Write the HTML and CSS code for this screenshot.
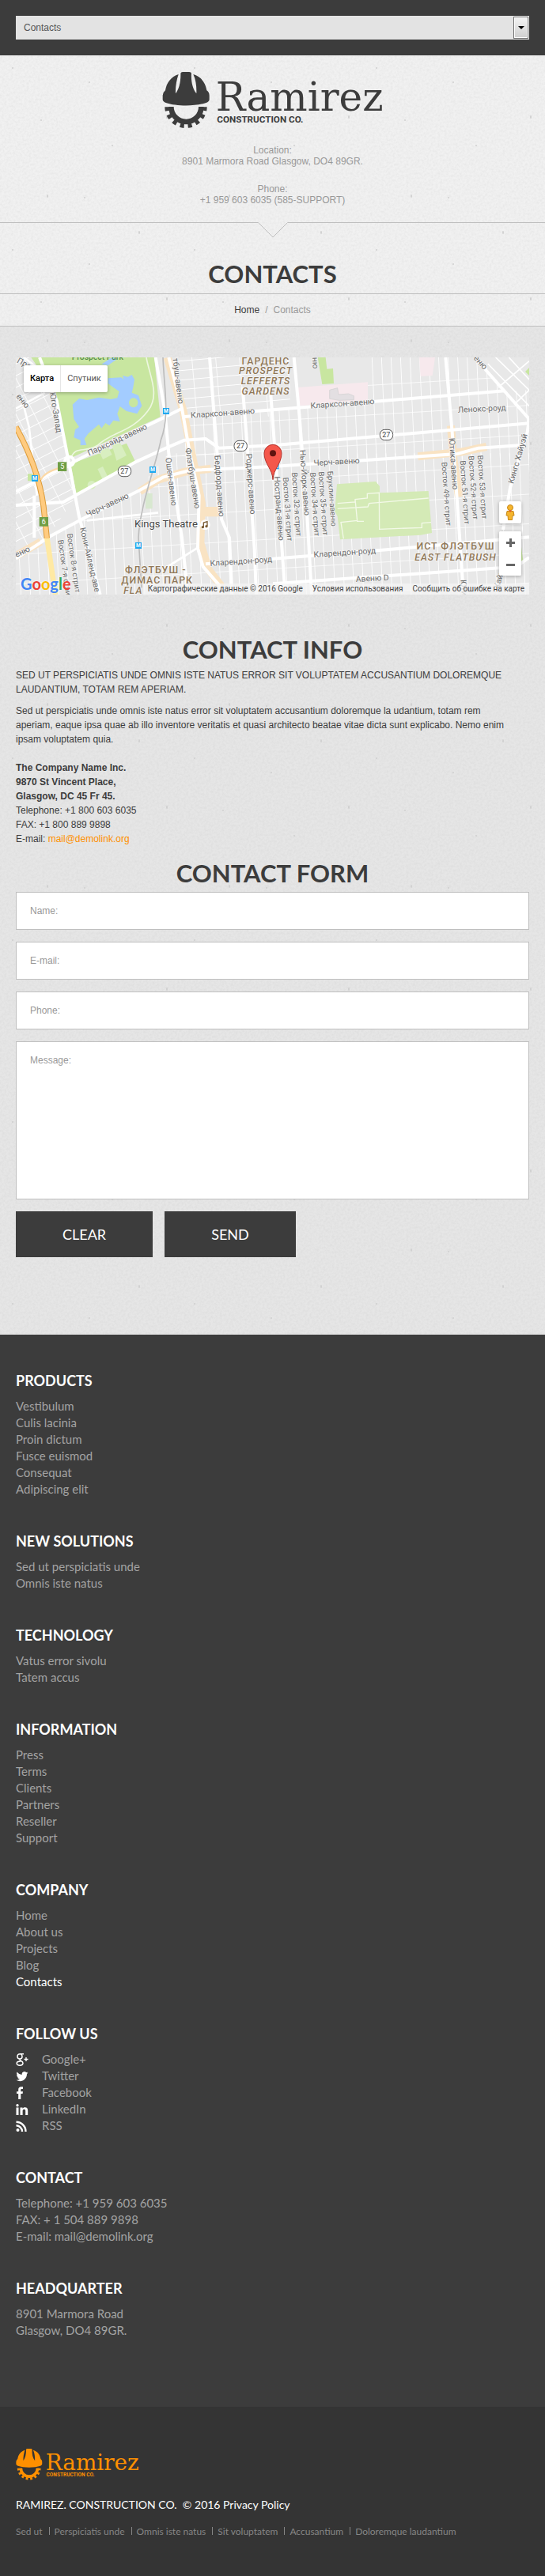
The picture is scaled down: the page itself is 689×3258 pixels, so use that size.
FILE: index.html
```html
<!DOCTYPE html>
<html lang="en">
<head>
<meta charset="utf-8">
<meta name="viewport" content="width=device-width, initial-scale=1">
<title>Contacts</title>
<link rel="stylesheet" href="styles.css">
</head>
<body>
<svg class="defs" width="0" height="0" aria-hidden="true">
  <symbol id="logo" viewBox="48 30 840 216">
    <path d="M118 38Q119 33 126 33H151Q158 33 159 38C157 70 164 98 178 115C179 90 176 62 166 42C196 50 213 75 217 103Q227 110 227 122V138Q226 146 215 150C175 164 102 164 62 150Q51 146 50 138V122Q51 110 60 103C64 75 82 50 110 42C102 65 98 90 99 115C112 98 119 70 118 38Z"/>
    <path d="M82 165A57 57 0 0 0 196 165" fill="none" stroke="currentColor" stroke-width="20"/>
    <path d="M66 166A72 72 0 0 0 210 166" fill="none" stroke="currentColor" stroke-width="16" stroke-dasharray="15 15.1"/>
    <text x="251" y="180" font-family="DejaVu Serif, serif" font-size="150">Ramirez</text>
    <text x="256" y="224" font-family="Roboto, sans-serif" font-weight="700" font-size="35">CONSTRUCTION CO.</text>
  </symbol>
</svg>

<nav class="topbar">
  <div class="picker">
    <select class="picker-select" aria-label="Page">
      <option>Contacts</option>
    </select>
  </div>
</nav>

<header class="header">
  <a class="brand" href="#"><svg class="brand-logo" role="img" aria-label="Ramirez"><use href="#logo"/></svg></a>
  <p class="header-line">Location:<br>8901 Marmora Road Glasgow, DO4 89GR.</p>
  <p class="header-line">Phone:<br>+1 959 603 6035 (585-SUPPORT)</p>
</header>
<div class="rule">
  <i class="rule-line"></i>
  <svg class="rule-notch" width="38" height="20" viewBox="0 0 38 20" aria-hidden="true"><path d="M0 .5H.5L19 19L37.500 .5H38" fill="none" stroke="#bfbfbf"/></svg>
  <i class="rule-line"></i>
</div>
<div class="title"><h1 class="heading">CONTACTS</h1></div>
<nav class="crumbs"><a class="crumbs-link" href="#">Home</a><span>/</span><span>Contacts</span></nav>

<main class="main">
  <section class="map">
    <svg class="map-art" viewBox="60 36 1947 900" preserveAspectRatio="xMidYMid slice" aria-hidden="true">
      <defs>
        <pattern id="grid" width="36" height="112" patternUnits="userSpaceOnUse" patternTransform="matrix(1 -.06 .045 1 0 0)">
          <path d="M0 0V112M0 0H36" stroke="#fff" stroke-width="5" fill="none"/>
        </pattern>
        <pattern id="grid2" width="62" height="40" patternUnits="userSpaceOnUse" patternTransform="rotate(-27)">
          <path d="M0 0V40M0 0H62" stroke="#fff" stroke-width="5" fill="none"/>
        </pattern>
        <pattern id="grid3" width="90" height="36" patternUnits="userSpaceOnUse" patternTransform="rotate(-5)">
          <path d="M0 0V36M0 0H90" stroke="#fff" stroke-width="5" fill="none"/>
        </pattern>
      </defs>
      <rect x="60" y="36" width="1947" height="900" fill="#e8e8e8"/>
      <path d="M60 36H210L290 560L180 720L60 790Z" fill="url(#grid2)"/>
      <path d="M60 800L180 720L520 540L640 400L1035 400H2007V936H60Z" fill="url(#grid)"/>
      <path d="M690 260L2007 160V420H690Z" fill="url(#grid)"/>
      <path d="M640 36H1100V260H690Z" fill="url(#grid3)"/>
      <path d="M1395 36H1820L1910 160L1395 200Z" fill="url(#grid)"/>
      <path d="M1850 60L2007 220M1880 36L2007 160M1930 36L2007 120M1890 150L2007 50M1950 215L2007 160" stroke="#fff" stroke-width="5"/>
      <g fill="none" stroke="#f9e3c3" stroke-width="30">
        <path d="M635 36L695 240L735 440L765 590L760 740L790 840L840 905M530 545L600 500L700 470L800 458M60 790L155 735"/>
        <path d="M1585 412L1750 395L1845 375M1710 295L1720 420L1740 565"/>
      </g>
      <path d="M765 603H828V640H765Z" fill="#f9e3c3"/>
      <path d="M1130 150L1395 130V200L1135 220ZM1590 36H1650L1640 105L1595 108Z" fill="#f7e9ed"/>
      <path d="M1250 160l30-8 4 25 38-3 20 8v15l-55 2-37-6z" fill="#e3dfe2" stroke="#cfcfcf" stroke-width="2"/>
      <g fill="#c8e6a0">
        <path d="M118 36H585L608 262L275 415L256 412L208 168Z"/>
        <path d="M268 440L480 362L515 435L290 555Z"/>
        <path d="M105 478H140V505H105ZM1205 36H1235L1240 80L1263 78L1266 135L1222 138Z"/>
      </g>
      <g transform="translate(1035 0)">
        <path d="M243 517L390 507L405 525V550L590 543L603 702L560 710L255 727L245 640L235 620Z" fill="#d4eab6"/>
        <path d="M245 590L312 585V575L358 570V553L403 550L404 688L565 682V665L600 662M312 575L320 658H345M320 655L258 662L268 724M245 610L360 603L365 590L590 570" fill="none" stroke="#f3f9e8" stroke-width="4"/>
        <path d="M957 90L972 75V105ZM942 755L950 815H940Z" fill="#c8e6a0"/>
      </g>
      <path d="M552 552H578V610H552Z" fill="#d8e8d0"/>
      <path d="M275 215L300 192L330 198L375 188L420 195L445 190L452 165L430 150L410 135V115L460 112L470 120L465 105L485 110L500 102L510 120L505 150L500 170L525 180L538 220L520 250L480 240L455 222L445 250L455 280L430 275L415 295L400 285L385 305L375 290L335 325L320 345L328 368L305 370V350L280 340L285 310L300 300L280 270Z" fill="#a3ccff"/>
      <ellipse cx="506" cy="208" rx="17" ry="18" fill="#c8e6a0"/>
      <path d="M385 62L425 36L445 42L410 66Z" fill="#a3ccff"/>
      <path d="M555 36C565 100 610 180 560 240C500 320 420 320 370 370C320 400 290 370 270 415" fill="none" stroke="#edf7e0" stroke-width="5"/>
      <path d="M375 390l35-15 15 30-35 18zM425 370l30-12 25 50-38 20zM370 460l20-10 22 45-20 10z" fill="#d8eec0"/>
      <circle cx="348" cy="520" r="16" fill="#d8eec0"/>
      <g fill="none" stroke="#fff" stroke-width="12" stroke-linejoin="round">
        <path d="M60 545L275 435L400 370L600 275L690 230"/>
        <path d="M60 597L240 585L520 430L630 380L700 350L780 345L830 380L1035 370L2007 286"/>
        <path d="M60 800L190 715L330 640L530 540L620 490L720 465L1035 450L1735 402L1815 380L1970 370"/>
        <path d="M690 262L1035 235L1915 163"/>
        <path d="M640 36L690 230L720 400L755 560L750 760L770 830L840 910"/>
        <path d="M590 36L625 240L640 400L690 720L712 936"/>
        <path d="M795 36L825 420L840 650L870 720L880 936"/>
        <path d="M920 150L940 400L965 760L972 936"/>
        <path d="M1025 150L1055 560L1082 936"/>
        <path d="M1115 36L1135 250L1165 640L1182 936"/>
        <path d="M1690 36L1715 320L1735 600L1758 936"/>
        <path d="M780 820L1035 800L1475 765L2007 718"/>
        <path d="M1035 895L1895 835L1965 825L2007 795"/>
        <path d="M1800 36L2007 270L2000 320L1935 530L1908 690"/>
        <path d="M150 36L215 200L260 430L300 640L380 936M130 560V720"/>
        <path d="M80 180L110 300L140 560M60 230L170 170M90 36L200 120M620 840L755 755M330 655L600 625" stroke-width="8"/>
        <circle cx="263" cy="430" r="17"/>
      </g>
      <path d="M618 36C622 150 645 260 610 350C590 450 530 600 525 720L537 910" fill="none" stroke="#bdbdbd" stroke-width="5"/>
      <path d="M178 720L210 936" stroke="#ffe9a3" stroke-width="20"/>
      <path d="M60 300C110 390 150 490 165 600L178 722" fill="none" stroke="#dc9c3a" stroke-width="22"/>
      <path d="M60 300C110 390 150 490 165 600L178 722" fill="none" stroke="#ffcb80" stroke-width="16"/>
      <path d="M155 500Q170 470 230 455" fill="none" stroke="#fbd9a8" stroke-width="7"/>

      <g class="map-street">
        <text transform="translate(338 410) rotate(-25)">Парксайд-авеню</text>
        <text transform="translate(332 642) rotate(-25)">Черч-авеню</text>
        <text transform="translate(724 266) rotate(-4)">Кларксон-авеню</text>
        <text transform="translate(797 828) rotate(-4)">Кларендон-роуд</text>
        <text transform="translate(62 55) rotate(28)">Проспект</text>
        <text transform="translate(60 185) rotate(50)">еню</text>
        <text transform="translate(62 795) rotate(-25)">еню</text>
        <text transform="translate(188 170) rotate(80)">Юго-Запад</text>
        <text transform="translate(655 40) rotate(83)">тбуш-авеню</text>
        <text transform="translate(628 418) rotate(83)">Ошен-авеню</text>
        <text transform="translate(703 382) rotate(81)">Флэтбуш-авеню</text>
        <text transform="translate(814 408) rotate(86)">Бедфорд-авеню</text>
        <text transform="translate(933 402) rotate(86)">Роджерс-авеню</text>
        <text transform="translate(303 684) rotate(77)">Кони-Айленд-аве</text>
      </g>
      <g class="map-street" transform="translate(1035 0)">
        <text transform="translate(143 230) rotate(-4)">Кларксон-авеню</text>
        <text transform="translate(702 246) rotate(-3)">Ленокс-роуд</text>
        <text transform="translate(155 447) rotate(-3)">Черч-авеню</text>
        <text transform="translate(155 795) rotate(-4)">Кларендон-роуд</text>
        <text transform="translate(315 888) rotate(-3)">Авеню D</text>
        <text transform="translate(150 36) rotate(88)">ню</text>
        <text transform="translate(760 40) rotate(48)">еню</text>
        <text transform="translate(912 517) rotate(-74)">Кингс Хайуэй</text>
        <text transform="translate(858 915) rotate(-74)">Хайуэй</text>
        <text transform="translate(712 880) rotate(86)">Юти</text>
        <text transform="translate(5 488) rotate(86)">Ностранд-авеню</text>
        <text transform="translate(102 388) rotate(86)">Нью-Йорк-авеню</text>
        <text transform="translate(668 342) rotate(86)">Ютика-авеню</text>
      </g>
      <g class="map-street map-minor">
        <text transform="translate(254 706) rotate(82)">Восток 8-я стрит</text>
        <text transform="translate(220 730) rotate(82)">Восток 7-я стрит</text>
        <text transform="translate(1073 492) rotate(86)">Восток 31-я стрит</text>
        <text transform="translate(1107 473) rotate(86)">Восток 32-я стрит</text>
        <text transform="translate(1176 473) rotate(86)">Восток 34-я стрит</text>
        <text transform="translate(1208 470) rotate(86)">Восток 35-я стрит</text>
        <text transform="translate(1242 468) rotate(86)">Бруклин-авеню</text>
        <text transform="translate(1675 434) rotate(86)">Восток 49-я стрит</text>
        <text transform="translate(1745 428) rotate(86)">Восток 51-я стрит</text>
        <text transform="translate(1777 410) rotate(86)">Восток 52-я стрит</text>
        <text transform="translate(1811 408) rotate(86)">Восток 53-я стрит</text>
      </g>
      <g class="map-area" text-anchor="middle">
        <text x="1008" y="62">ГАРДЕНС</text>
        <g font-style="italic"><text x="1008" y="100">PROSPECT</text><text x="1008" y="139">LEFFERTS</text><text x="1008" y="178">GARDENS</text></g>
        <text x="590" y="856">ФЛЭТБУШ -</text>
        <text x="596" y="894">ДИМАС ПАРК</text>
        <text x="505" y="932" font-style="italic">FLA</text>
        <text x="1728" y="766">ИСТ ФЛЭТБУШ</text>
        <text x="1728" y="806" font-style="italic">EAST FLATBUSH</text>
      </g>
      <text x="370" y="45" text-anchor="middle" font-family="Roboto, sans-serif" font-size="31" font-weight="500" fill="#568c48">Prospect Park</text>
      <text x="510" y="682" font-family="Roboto, sans-serif" font-size="39" fill="#444" stroke="#fff" stroke-width="4" paint-order="stroke">Kings Theatre</text>
      <circle cx="778" cy="671" r="19" fill="#fff"/><path d="M772 680V663L786 659V676" fill="none" stroke="#7b5c35" stroke-width="4"/><circle cx="769" cy="680" r="5" fill="#7b5c35"/><circle cx="783" cy="677" r="5" fill="#7b5c35"/>
      <g class="map-shield" text-anchor="middle">
        <rect x="448" y="448" width="49" height="40" rx="18"/><text x="472" y="477">27</text>
        <rect x="888" y="352" width="49" height="40" rx="18"/><text x="912" y="381">27</text>
        <rect x="1441" y="310" width="49" height="40" rx="18"/><text x="1465" y="339">27</text>
      </g>
      <g class="map-exit" text-anchor="middle">
        <rect x="219" y="433" width="34" height="35"/><text x="236" y="459">5</text>
        <rect x="149" y="642" width="34" height="35"/><text x="166" y="669">6</text>
      </g>
      <g class="map-metro" text-anchor="middle">
        <rect x="618" y="228" width="24" height="24"/><text x="630" y="247">M</text>
        <rect x="567" y="450" width="24" height="24"/><text x="579" y="469">M</text>
        <rect x="120" y="483" width="24" height="24"/><text x="132" y="502">M</text>
        <rect x="513" y="738" width="24" height="24"/><text x="525" y="757">M</text>
        <rect x="1034" y="436" width="24" height="24"/><text x="1046" y="455">M</text>
      </g>
      <path d="M1035 500C1034 460 1002 440 1002 400A33 33 0 0 1 1068 400C1068 440 1036 460 1035 500Z" fill="#f4574b" stroke="#b5322b" stroke-width="3"/>
      <circle cx="1035" cy="400" r="12" fill="#5e1410"/>
    </svg>
    <div class="map-types"><button class="map-type map-type-on" type="button">Карта</button><button class="map-type" type="button">Спутник</button></div>
    <div class="map-tools">
      <button class="map-tool" type="button" aria-label="Street View"><svg width="12" height="20" viewBox="0 0 12 20"><circle cx="6" cy="4" r="3.500" fill="#f5b52e" stroke="#c78717"/><path d="M2 8.500H10L11 14H9L8.500 19.500H3.500L3 14H1Z" fill="#f5b52e" stroke="#c78717"/><path d="M4 7.500H8L6 10Z" fill="#e2512f"/></svg></button>
      <div class="map-zoom">
        <button class="map-tool" type="button" aria-label="Zoom in"><svg width="11" height="11" viewBox="0 0 11 11"><path d="M5.500 0V11M0 5.500H11" stroke="#666" stroke-width="3"/></svg></button>
        <button class="map-tool" type="button" aria-label="Zoom out"><svg width="11" height="11" viewBox="0 0 11 11"><path d="M0 5.500H11" stroke="#666" stroke-width="3"/></svg></button>
      </div>
    </div>
    <a class="google" href="#"><span class="g-blue">G</span><span class="g-red">o</span><span class="g-yellow">o</span><span class="g-blue">g</span><span class="g-green">l</span><span class="g-red">e</span></a>
    <div class="map-legal"><span>Картографические данные © 2016 Google</span><a href="#">Условия использования</a><a href="#">Сообщить об ошибке на карте</a></div>
  </section>

  <h2 class="heading info-heading">CONTACT INFO</h2>
  <p class="text">SED UT PERSPICIATIS UNDE OMNIS ISTE NATUS ERROR SIT VOLUPTATEM ACCUSANTIUM DOLOREMQUE LAUDANTIUM, TOTAM REM APERIAM.</p>
  <p class="text">Sed ut perspiciatis unde omnis iste natus error sit voluptatem accusantium doloremque la udantium, totam rem<br>aperiam, eaque ipsa quae ab illo inventore veritatis et quasi architecto beatae vitae dicta sunt explicabo. Nemo enim<br>ipsam voluptatem quia.</p>
  <address class="address">
    <strong>The Company Name Inc.<br>9870 St Vincent Place,<br>Glasgow, DC 45 Fr 45.</strong><br>
    Telephone: +1 800 603 6035<br>
    FAX: +1 800 889 9898<br>
    E-mail: <a class="mail" href="mailto:mail@demolink.org">mail@demolink.org</a>
  </address>

  <h2 class="heading form-heading">CONTACT FORM</h2>
  <form class="form">
    <input class="field" type="text" aria-label="Name" placeholder="Name:">
    <input class="field" type="email" aria-label="E-mail" placeholder="E-mail:">
    <input class="field" type="tel" aria-label="Phone" placeholder="Phone:">
    <textarea class="field field-message" aria-label="Message" placeholder="Message:"></textarea>
    <div class="actions"><button class="btn" type="reset">CLEAR</button><button class="btn" type="submit">SEND</button></div>
  </form>
</main>

<footer>
  <div class="footer">
    <section><h3 class="footer-heading">PRODUCTS</h3>
      <ul class="links"><li><a href="#">Vestibulum</a></li><li><a href="#">Culis lacinia</a></li><li><a href="#">Proin dictum</a></li><li><a href="#">Fusce euismod</a></li><li><a href="#">Consequat</a></li><li><a href="#">Adipiscing elit</a></li></ul></section>
    <section><h3 class="footer-heading">NEW SOLUTIONS</h3>
      <ul class="links"><li><a href="#">Sed ut perspiciatis unde</a></li><li><a href="#">Omnis iste natus</a></li></ul></section>
    <section><h3 class="footer-heading">TECHNOLOGY</h3>
      <ul class="links"><li><a href="#">Vatus error sivolu</a></li><li><a href="#">Tatem accus</a></li></ul></section>
    <section><h3 class="footer-heading">INFORMATION</h3>
      <ul class="links"><li><a href="#">Press</a></li><li><a href="#">Terms</a></li><li><a href="#">Clients</a></li><li><a href="#">Partners</a></li><li><a href="#">Reseller</a></li><li><a href="#">Support</a></li></ul></section>
    <section><h3 class="footer-heading">COMPANY</h3>
      <ul class="links"><li><a href="#">Home</a></li><li><a href="#">About us</a></li><li><a href="#">Projects</a></li><li><a href="#">Blog</a></li><li><a class="current" href="#">Contacts</a></li></ul></section>
    <section><h3 class="footer-heading">FOLLOW US</h3>
      <ul class="links">
        <li><a class="social" href="#"><svg class="social-icon" viewBox="0 0 16 16"><path d="M10 .8H5.500C3.500 .8 2 2.200 2 4S3.300 7 5 7S8 5.800 8 4S7 .8 5.500 .8M5.500 7C4.500 8 5 8.700 6.500 9.500C8.500 10.500 9 11.200 9 12.300C9 14 7.500 15.200 5 15.200S1.200 14 1.200 12.500S3 10 6 10" fill="none" stroke="#fff" stroke-width="1.500"/><path d="M13 5V10M10.500 7.500H15.500" stroke="#fff" stroke-width="1.400"/></svg>Google+</a></li>
        <li><a class="social" href="#"><svg class="social-icon" viewBox="0 0 16 16"><path fill="#fff" d="M15.500 3.500c-.5.300-1.100.4-1.700.5.600-.4 1-.9 1.200-1.600-.6.300-1.200.6-1.900.7A3.100 3.100 0 0 0 7.800 6C5.200 5.800 3 4.600 1.500 2.600c-.8 1.400-.4 3.100.9 4-.5 0-1-.1-1.400-.4 0 1.500 1 2.800 2.500 3.100-.4.100-.9.100-1.400 0 .4 1.300 1.500 2.100 2.900 2.200A6.200 6.200 0 0 1 .5 12.800C6.500 16.500 14 12.500 14 5.100c.6-.4 1.100-1 1.500-1.600z"/></svg>Twitter</a></li>
        <li><a class="social" href="#"><svg class="social-icon" viewBox="0 0 16 16"><path fill="#fff" d="M3.200 16V9H1V6.300h2.200V4c0-2.400 1.300-3.700 3.500-3.700H9V3H7.600C6.700 3 6.300 3.400 6.300 4.200v2.100H9L8.600 9H6.300v7z"/></svg>Facebook</a></li>
        <li><a class="social" href="#"><svg class="social-icon" viewBox="0 0 16 16"><path fill="#fff" d="M.5 5.500h3V15h-3zM2 1a1.700 1.700 0 1 1 0 3.400A1.700 1.700 0 0 1 2 1zM5.500 5.500h3v1.300c.6-1 1.600-1.600 3-1.600 2.700 0 3.700 1.600 3.700 4.200V15h-3V9.900c0-1.300-.4-2.100-1.600-2.100-1.300 0-2 .9-2 2.200v5h-3.100z"/></svg>LinkedIn</a></li>
        <li><a class="social" href="#"><svg class="social-icon" viewBox="0 0 16 16"><circle cx="2.500" cy="13" r="2" fill="#fff"/><path d="M.5 7.300A7.500 7.500 0 0 1 8 15M.5 2.800A12 12 0 0 1 12.500 15" fill="none" stroke="#fff" stroke-width="2.400"/></svg>RSS</a></li>
      </ul></section>
    <section><h3 class="footer-heading">CONTACT</h3>
      <ul class="links"><li>Telephone: +1 959 603 6035</li><li>FAX: + 1 504 889 9898</li><li>E-mail: <a href="mailto:mail@demolink.org">mail@demolink.org</a></li></ul></section>
    <section><h3 class="footer-heading">HEADQUARTER</h3>
      <ul class="links"><li>8901 Marmora Road</li><li>Glasgow, DO4 89GR.</li></ul></section>
  </div>
  <div class="bottom">
    <a class="bottom-brand" href="#"><svg class="bottom-logo" role="img" aria-label="Ramirez"><use href="#logo"/></svg></a>
    <p class="copyright">RAMIREZ. CONSTRUCTION CO.&nbsp; © 2016 <a href="#">Privacy Policy</a></p>
    <ul class="bottom-links"><li><a href="#">Sed ut</a></li><li><a href="#">Perspiciatis unde</a></li><li><a href="#">Omnis iste natus</a></li><li><a href="#">Sit voluptatem</a></li><li><a href="#">Accusantium</a></li><li><a href="#">Doloremque laudantium</a></li></ul>
  </div>
</footer>
</body>
</html>
```
FILE: styles.css
```css
* { box-sizing: border-box; }

body {
  margin: 0;
  color: #3c3c3c;
  background-color: #f1f1f1;
  font: 12px/18px "Liberation Sans", Arial, sans-serif;
}

body, .main {
  background-image: url("data:image/svg+xml,%3Csvg xmlns='http://www.w3.org/2000/svg' width='230' height='230'%3E%3Cfilter id='n' x='0' y='0' width='100%25' height='100%25'%3E%3CfeTurbulence type='fractalNoise' baseFrequency='.35' numOctaves='3' stitchTiles='stitch'/%3E%3CfeColorMatrix values='0 0 0 0 .4 0 0 0 0 .4 0 0 0 0 .4 .22 0 0 0 -.07'/%3E%3C/filter%3E%3Crect width='230' height='230' filter='url(%23n)'/%3E%3Cg fill='%23cfcfcf'%3E%3Cellipse cx='16' cy='86' rx='1' ry='1'/%3E%3Cellipse cx='60' cy='18' rx='1' ry='2'/%3E%3Cellipse cx='107' cy='20' rx='1' ry='1'/%3E%3Cellipse cx='176' cy='64' rx='1' ry='2'/%3E%3Cellipse cx='52' cy='152' rx='1' ry='1'/%3E%3Cellipse cx='211' cy='148' rx='1' ry='2'/%3E%3Cellipse cx='113' cy='104' rx='1' ry='1'/%3E%3Cellipse cx='142' cy='184' rx='1' ry='1'/%3E%3C/g%3E%3C/svg%3E");
}

a { color: inherit; text-decoration: none; }
p, ul { margin: 0; padding: 0; }
ul { list-style: none; }
button, input, textarea, select { font: inherit; border-radius: 0; }
.defs { display: block; height: 0; }

.topbar { padding: 20px; background: #3c3c3c; }
.picker { position: relative; }
.picker-select {
  display: block;
  width: 100%;
  height: 30px;
  padding: 0 30px 0 10px;
  border: 0;
  appearance: none;
  color: #555;
  background: #e3e3e3;
}
.picker::before {
  content: "";
  position: absolute;
  top: 1px; right: 1px; bottom: 1px;
  width: 17px;
  border: 1px solid #707070;
  box-shadow: inset 0 0 0 1px #fff;
  background: linear-gradient(#f3f3f3, #cfcfcf);
  pointer-events: none;
}
.picker::after {
  content: "";
  position: absolute;
  top: 13px; right: 6px;
  border: 4px solid transparent;
  border-top-color: #000;
  border-bottom: 0;
  pointer-events: none;
}

.header {
  display: flex;
  flex-direction: column;
  align-items: center;
  gap: 21px;
  padding: 20px 20px 21px;
  text-align: center;
  color: #999;
}
.brand { display: block; color: #3c3c3c; }
.brand-logo { display: block; width: 280px; height: 72px; fill: currentColor; }
.header-line { line-height: 14px; }

.rule { display: flex; height: 20px; }
.rule-line { flex: 1; height: 1px; background: #bfbfbf; }
.title { padding: 30px 20px 10px; }
.heading {
  margin: 0;
  text-align: center;
  font: 700 31px/30px Lato, sans-serif;
}
.crumbs {
  display: flex;
  justify-content: center;
  align-items: center;
  gap: 7px;
  height: 42px;
  border: solid #bfbfbf;
  border-width: 1px 0;
  color: #999;
}
.crumbs-link { color: #3c3c3c; }

.main { padding: 39px 20px 98px; background-color: #e6e6e6; }

.map { position: relative; height: 300px; overflow: hidden; font-family: Roboto, sans-serif; }
.map-art { display: block; width: 100%; height: 100%; }
.map-street { font-size: 31px; fill: #6b6b6b; stroke: #f5f5f5; stroke-width: 4px; paint-order: stroke; }
.map-minor { font-size: 29px; }
.map-area { font-size: 37px; font-weight: 500; letter-spacing: 3px; fill: #8f7757; stroke: #f5f5f5; stroke-width: 4px; paint-order: stroke; }
.map-shield { font-size: 27px; }
.map-shield rect { fill: #fff; stroke: #555; stroke-width: 3px; }
.map-shield text { fill: #444; }
.map-exit { font-size: 27px; }
.map-exit rect { fill: #6f9e45; }
.map-exit text { fill: #fff; }
.map-metro { font-size: 20px; font-weight: 700; }
.map-metro rect { fill: #1fa8f0; }
.map-metro text { fill: #fff; }
.map-types {
  position: absolute;
  top: 10px; left: 10px;
  display: flex;
  background: #fff;
  border-radius: 2px;
  box-shadow: 0 1px 4px rgba(0, 0, 0, .3);
}
.map-type { height: 34px; padding: 0 8px; border: 0; background: none; color: #565656; font-size: 11px; }
.map-type-on { border-right: 1px solid #e6e6e6; color: #000; font-weight: 500; }
.map-tools { position: absolute; right: 10px; bottom: 24px; display: grid; gap: 10px; }
.map-tool {
  display: grid;
  place-items: center;
  width: 28px;
  height: 28px;
  padding: 0;
  border: 0;
  border-radius: 2px;
  background: #fff;
}
.map-tools > .map-tool, .map-zoom { box-shadow: 0 1px 4px rgba(0, 0, 0, .3); }
.map-zoom { border-radius: 2px; background: #fff; }
.google { position: absolute; left: 6px; bottom: 4px; font: 700 20px/20px Lato, sans-serif; text-shadow: 0 0 2px #fff; }
.g-blue { color: #4285f4; }
.g-red { color: #ea4335; }
.g-yellow { color: #fbbc05; }
.g-green { color: #34a853; }
.map-legal {
  position: absolute;
  right: 0; bottom: 0;
  display: flex;
  padding: 0 6px;
  gap: 12px;
  font-size: 10px;
  line-height: 14px;
  white-space: nowrap;
  color: #444;
  background: rgba(245, 245, 245, .75);
}

.info-heading { margin: 54px 0 9px; }
.text { margin-bottom: 9px; }
.address { margin-top: 18px; font-style: normal; }
.mail { color: #ff9000; }
.form-heading { margin: 19px 0 9px; }

.form { display: grid; gap: 15px; }
.field {
  display: block;
  width: 100%;
  height: 48px;
  padding: 0 17px;
  border: 1px solid #bfbfbf;
  background: #fff;
  color: #3c3c3c;
}
.field::placeholder { color: #999; opacity: 1; }
.field-message { height: 200px; padding: 14px 17px; resize: none; }
.actions { display: flex; gap: 15px; }
.btn {
  height: 58px;
  padding: 0 59px;
  border: 0;
  background: #3c3c3c;
  color: #fff;
  font: 18px/20px Lato, sans-serif;
}

.footer {
  display: grid;
  gap: 43px;
  padding: 46px 20px 86px;
  background: #3c3c3c;
  color: #a3a3a3;
  font: 15px/21px Lato, sans-serif;
}
.footer-heading { margin: 0 0 10px; color: #fff; font: 700 18px/24px Lato, sans-serif; }
.current { color: #fff; }
.social { display: flex; align-items: center; gap: 17px; }
.social-icon { width: 16px; height: 16px; }

.bottom { padding: 51px 20px 46px; background: #343434; font-family: Lato, sans-serif; }
.bottom-brand { display: inline-block; vertical-align: top; color: #ff9000; }
.bottom-logo { display: block; width: 156px; height: 43px; fill: currentColor; }
.copyright { margin: 20px 0 14px; color: #fff; font-size: 14px; line-height: 20px; }
.bottom-links { display: flex; flex-wrap: wrap; color: #858585; line-height: 20px; }
.bottom-links li + li { display: flex; align-items: center; }
.bottom-links li + li::before { content: ""; width: 1px; height: 10px; margin: 0 6px 2px 8px; background: #858585; }
```
